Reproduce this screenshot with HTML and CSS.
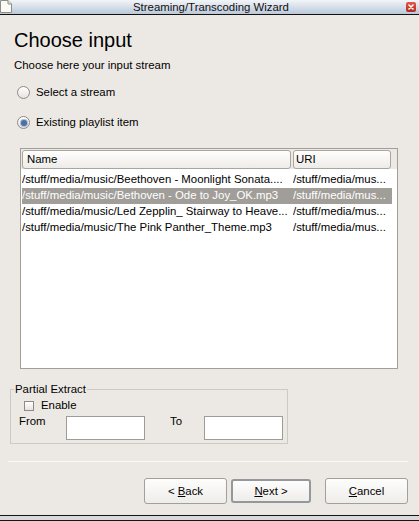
FILE: index.html
```html
<!DOCTYPE html>
<html>
<head>
<meta charset="utf-8">
<title>Streaming/Transcoding Wizard</title>
<link rel="stylesheet" href="styles.css">
</head>
<body>
<div class="window">
  <div class="titlebar">
    <svg class="doc-icon" width="12" height="13" viewBox="0 0 12 13">
      <path d="M0.5 0.5 H8 L11.5 4 V12.5 H0.5 Z" fill="#fbfbf6" stroke="#8c8c88"/>
      <path d="M8 0.5 V4 H11.5" fill="#e4e4dc" stroke="#8c8c88"/>
    </svg>
    <span class="title">Streaming/Transcoding Wizard</span>
    <span class="close">
      <svg width="10" height="10" viewBox="0 0 10 10">
        <path d="M3 3 L7 7 M7 3 L3 7" stroke="#fff" stroke-width="1.6" stroke-linecap="round"/>
      </svg>
    </span>
  </div>
  <div class="content">
    <h1 class="heading">Choose input</h1>
    <p class="subtitle">Choose here your input stream</p>
    <div class="radio-row first">
      <span class="radio"></span>
      <span class="radio-label">Select a stream</span>
    </div>
    <div class="radio-row">
      <span class="radio checked"><span class="dot"></span></span>
      <span class="radio-label">Existing playlist item</span>
    </div>

    <div class="list-frame">
      <div class="list-header">
        <div class="hcell hname">Name</div>
        <div class="hcell huri">URI</div>
      </div>
      <div class="list-body">
        <div class="row">
          <span class="c1">/stuff/media/music/Beethoven - Moonlight Sonata....</span>
          <span class="c2">/stuff/media/mus...</span>
        </div>
        <div class="row selected">
          <span class="c1">/stuff/media/music/Bethoven - Ode to Joy_OK.mp3</span>
          <span class="c2">/stuff/media/mus...</span>
        </div>
        <div class="row">
          <span class="c1">/stuff/media/music/Led Zepplin_ Stairway to Heave...</span>
          <span class="c2">/stuff/media/mus...</span>
        </div>
        <div class="row">
          <span class="c1">/stuff/media/music/The Pink Panther_Theme.mp3</span>
          <span class="c2">/stuff/media/mus...</span>
        </div>
      </div>
    </div>

    <div class="group">
      <div class="group-title">Partial Extract</div>
      <div class="check-row">
        <span class="checkbox"></span>
        <span class="check-label">Enable</span>
      </div>
      <div class="range-row">
        <span class="range-label from">From</span>
        <span class="field"></span>
        <span class="range-label to">To</span>
        <span class="field"></span>
      </div>
    </div>

    <div class="separator"></div>

    <div class="buttons">
      <div class="btn back">&lt; <u>B</u>ack</div>
      <div class="btn next default"><u>N</u>ext &gt;</div>
      <div class="btn cancel"><u>C</u>ancel</div>
    </div>
  </div>
  <div class="bottom-frame"></div>
</div>
</body>
</html>
```

FILE: styles.css
```css
* { box-sizing: border-box; }

html, body {
  margin: 0;
  padding: 0;
  background: #ece9e5;
}

body {
  font-family: "Liberation Sans", Arial, sans-serif;
  font-size: 11.4px;
  color: #000;
}

.window {
  width: 419px;
  height: 521px;
  display: flex;
  flex-direction: column;
  overflow: hidden;
}

/* Title bar */
.titlebar {
  height: 15px;
  flex: none;
  border-bottom: 1px solid #111;
  background: linear-gradient(#f3f5f8, #bac8da);
  display: flex;
  align-items: center;
  padding: 0 3px 0 0;
}

.doc-icon {
  flex: none;
  margin-top: -1px;
}

.title {
  flex: 1;
  text-align: center;
  font-size: 11.4px;
  line-height: 14px;
  color: #111;
  margin-left: 4px;
}

.close {
  flex: none;
  width: 10px;
  height: 10px;
  border-radius: 2px;
  background: linear-gradient(#e0574a, #b62a1f);
  display: flex;
  align-items: center;
  justify-content: center;
}

.close svg { display: block; }

/* Content */
.content {
  flex: 1;
  padding: 0 11px 0 8px;
  display: flex;
  flex-direction: column;
}

.heading {
  margin: 14px 0 0 6px;
  font-weight: normal;
  font-size: 20px;
  line-height: 23px;
}

.subtitle {
  margin: 7px 0 0 6px;
  line-height: 13px;
}

.radio-row {
  display: flex;
  align-items: center;
  height: 13px;
  padding-left: 9px;
  margin-top: 17px;
}

.radio-row.first { margin-top: 14px; }

.radio {
  width: 13px;
  height: 13px;
  border-radius: 50%;
  border: 1px solid #8e8b86;
  background: linear-gradient(#ffffff, #e6e4e0);
  display: flex;
  align-items: center;
  justify-content: center;
}

.radio .dot {
  width: 6px;
  height: 6px;
  border-radius: 50%;
  background: #4d6fa3;
  box-shadow: 0 0 0 1px #a9bad4;
}

.radio-label {
  margin-left: 6px;
  line-height: 13px;
}

/* List */
.list-frame {
  margin: 19px 0 0 12px;
  width: 378px;
  height: 221px;
  border: 1px solid #a29f99;
  padding: 1px 0 0 0;
  display: flex;
  flex-direction: column;
}

.list-header {
  display: flex;
  padding-left: 1px;
  gap: 2px;
  height: 19px;
  flex: none;
}

.hcell {
  height: 19px;
  line-height: 17px;
  border: 1px solid #a9a6a0;
  border-radius: 3px;
  background: linear-gradient(#fefefd, #eeece8);
}

.hname { width: 269px; padding-left: 4px; }
.huri { width: 98px; padding-left: 2px; }

.list-body {
  flex: 1;
  background: #fff;
  padding-top: 3px;
}

.row {
  display: flex;
  width: 370px;
  height: 16px;
  line-height: 14px;
  margin-left: 1px;
  white-space: nowrap;
}

.row.selected {
  background: #a19e9a;
  color: #fff;
}

.c1 { width: 271px; overflow: hidden; }
.c2 { flex: 1; overflow: hidden; }

/* Group */
.group {
  margin: 20px 0 0 2px;
  width: 278px;
  border: 1px solid #cdcac4;
  padding: 0 0 3px 0;
}

.group-title {
  width: fit-content;
  margin: -7px 0 0 3px;
  padding: 0 1px;
  line-height: 13px;
  background: #ece9e5;
}

.check-row {
  display: flex;
  align-items: center;
  height: 13px;
  margin-top: 3px;
  padding-left: 13px;
}

.checkbox {
  width: 10px;
  height: 10px;
  border: 1px solid #8e8b86;
  background: linear-gradient(#ffffff, #e6e4e0);
}

.check-label {
  margin-left: 7px;
  line-height: 13px;
}

.range-row {
  display: flex;
  align-items: flex-start;
  margin-top: 4px;
  padding-left: 8px;
}

.range-label {
  line-height: 11px;
}

.range-label.from { width: 47px; }
.range-label.to { width: 34px; margin-left: 25px; }

.field {
  width: 79px;
  height: 24px;
  background: #fff;
  border: 1px solid #9f9c96;
}

/* Separator + buttons */
.separator {
  margin-top: 17px;
  height: 1px;
  background: #faf9f7;
}

.buttons {
  display: flex;
  justify-content: flex-end;
  align-items: flex-start;
  margin-top: 16px;
}

.btn {
  height: 26px;
  line-height: 24px;
  text-align: center;
  border: 1px solid #a3a09a;
  border-radius: 3px;
  background: linear-gradient(#fdfdfc, #efedea);
}

.btn.back { width: 83px; }
.btn.next {
  width: 80px;
  height: 24px;
  line-height: 20px;
  margin: 1px 14px 0 4px;
  border: 2px solid #94979c;
}
.btn.cancel { width: 83px; }

.bottom-frame {
  flex: none;
  height: 6px;
  border-top: 1px solid #151515;
  border-bottom: 1px solid #151515;
  background: #d9d9d9;
}
```
